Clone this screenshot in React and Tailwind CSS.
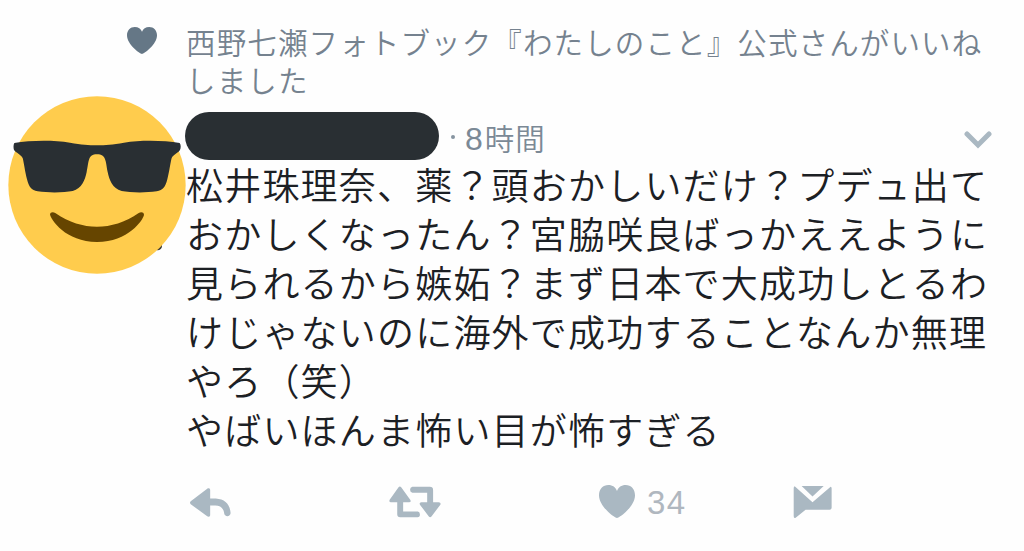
import React from "react";

const bodyLines = [
  "松井珠理奈、薬？頭おかしいだけ？プデュ出て",
  "おかしくなったん？宮脇咲良ばっかええように",
  "見られるから嫉妬？まず日本で大成功しとるわ",
  "けじゃないのに海外で成功することなんか無理",
  "やろ（笑）",
  "やばいほんま怖い目が怖すぎる",
];

const HeartIcon = ({ className }) => (
  <svg viewBox="0 0 108 100" preserveAspectRatio="none" className={className} fill="currentColor">
    <path d="M54 100C47 100 0 65 0 31C0 12 12 0 28 0C41 0 50 7 54 18C58 7 67 0 80 0C96 0 108 12 108 31C108 65 61 100 54 100Z" />
  </svg>
);

const SunglassesFace = () => (
  <svg viewBox="24 50 534 534" className="w-[178px] h-[178px]">
    <ellipse cx="473" cy="500" rx="13" ry="13" fill="#3b3a36" />
    <circle cx="291" cy="317" r="266" fill="#ffcc4d" />
    <path
      fill="#664500"
      d="M150 405C151 397 160 397 167 402C247 456 335 456 415 402C422 397 431 397 432 406C430 421 385 488 291 488C197 488 152 421 150 405Z"
    />
    <path
      fill="#292f33"
      d="M43 191C90 183 160 182 210 190C245 196 265 198 291 198C317 198 337 196 372 190C422 182 492 183 539 191C543 197 543 205 540 212C535 220 520 226 515 236C511 251 508 278 502 300C496 323 489 333 470 336C435 341 390 340 365 335C337 327 328 302 323 278C317 247 319 225 291 225C263 225 267 247 260 278C255 302 246 327 218 335C193 340 148 341 113 336C94 333 87 323 81 300C75 278 72 251 68 236C63 226 48 220 42 212C40 205 40 197 43 191Z"
    />
  </svg>
);

const ReplyIcon = () => (
  <svg viewBox="30 38 124 88" className="w-[41px] h-[29px]" fill="currentColor">
    <path d="M32 78L82 40C86 37 91 39 91 44V70H108C137 72 151 88 153 114C153 125 137 127 134 117C132 99 122 91 106 91H91V120C91 125 86 127 82 124L32 87C29 84 29 81 32 78Z" />
  </svg>
);

const RetweetIcon = () => (
  <svg viewBox="626 35 158 96" className="w-[52px] h-[32px]" fill="currentColor">
    <path d="M655 38Q659 34 663 38L691 77Q694 84 687 84H669V112H714Q720 114 720 121Q720 129 713 129H660Q651 129 651 120V84H632Q625 83 628 76Z" />
    <path d="M697 37H750Q760 37 760 47V84H777Q785 85 782 91L755 127Q751 132 747 127L720 91Q717 85 724 84H742V55H697Q690 53 690 46Q690 39 697 37Z" />
  </svg>
);

const MessageIcon = () => (
  <svg viewBox="639 35 116 97" className="w-[39px] h-[32px]" fill="currentColor">
    <path d="M664 35H731L697 67Z" />
    <path d="M643 36L697 84L752 37Q755 38 755 42V101Q755 107 749 107H676L646 131Q640 134 640 126V41Q640 38 643 36Z" />
  </svg>
);

const App = () => {
  return (
    <div
      lang="ja"
      className="w-[1024px] h-[551px] overflow-hidden bg-[#fefefe] font-['Noto_Sans_CJK_JP',sans-serif] font-[350]"
    >
      {/* Liked by */}
      <div className="flex pt-[22px] text-[#75828f]">
        <div className="w-[186px] shrink-0 pl-[127px] pt-[5px]">
          <HeartIcon className="w-[30px] h-[27px] text-[#657786]" />
        </div>
        <p className="whitespace-nowrap text-[29.5px] leading-[38px] tracking-[1.13px]">
          西野七瀬フォトブック『わたしのこと』公式さんがいいね
          <br />
          しました
        </p>
      </div>

      <div className="flex">
        <div className="w-[187px] shrink-0 pl-2 -mt-[2px]">
          <SunglassesFace />
        </div>

        <div className="flex-1">
          {/* Name and time */}
          <div className="flex items-center pt-[14px] h-[62px]">
            <div className="w-[254px] h-[48px] -ml-[2px] rounded-full bg-[#292f33]" />
            <div className="ml-[12px] mt-[2px] size-1 rounded-full bg-[#8694a0]" />
            <span className="ml-[10px] mt-[4px] text-[29.5px] leading-[38px] tracking-[1px] text-[#7b8996]">
              <span className="mr-px font-['Liberation_Sans',sans-serif] text-[32px]">8</span>時間
            </span>
            <svg viewBox="0 0 28 18" className="ml-auto mr-[32px] mt-[7px] w-7 h-[18px]" fill="none">
              <path d="M3 3L14 14L25 3" stroke="#aab8c2" strokeWidth="5" strokeLinecap="round" />
            </svg>
          </div>

          {/* Tweet text */}
          <div className="-ml-px whitespace-nowrap text-[37px] leading-[49px] tracking-[1.2px] text-[#1c2024]">
            {bodyLines.map((line, index) => (
              <p key={index}>{line}</p>
            ))}
          </div>

          {/* Actions */}
          <div className="flex items-center mt-[31px] ml-[3px] h-[34px] text-[#aab8c2]">
            <div className="w-[199px]">
              <ReplyIcon />
            </div>
            <div className="w-[210px]">
              <RetweetIcon />
            </div>
            <div className="flex items-center w-[194px]">
              <HeartIcon className="w-9 h-[33px] -mt-px" />
              <span className="ml-[12px] mt-[2px] font-['Liberation_Sans',sans-serif] text-[33px] leading-[34px] tracking-[1.5px] text-[#b0b7bf]">
                34
              </span>
            </div>
            <MessageIcon />
          </div>
        </div>
      </div>
    </div>
  );
};

export default App;
